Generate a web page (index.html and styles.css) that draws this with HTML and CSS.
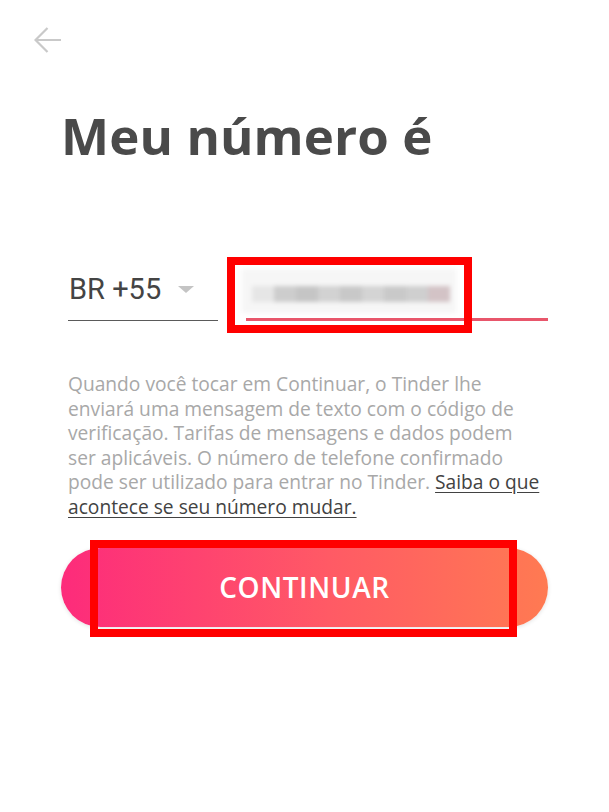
FILE: index.html
```html
<!DOCTYPE html>
<html lang="pt-BR">
<head>
	<meta charset="utf-8">
	<title>Meu número é</title>
	<link rel="stylesheet" href="styles.css">
</head>
<body>
	<div class="screen">
		<div class="top-bar">
			<svg class="back" width="28" height="28" viewBox="0 0 28 28">
				<path d="M27 13 H1.5 M13.5 1 L1.5 13 L13.5 25" fill="none" stroke="#c9c9c9" stroke-width="2.2"/>
			</svg>
		</div>

		<h1 class="title">Meu número é</h1>

		<div class="phone-row">
			<div class="country">
				<span class="country-code">BR +55</span>
				<span class="caret"></span>
			</div>
			<div class="number">
				<div class="blur">
					<span class="px p1"></span><span class="px p2"></span><span class="px p3"></span><span class="px p4"></span><span class="px p5"></span><span class="px p6"></span><span class="px p7"></span><span class="px p8"></span><span class="px p9"></span>
				</div>
				<div class="mark mark-number"></div>
			</div>
		</div>

		<p class="info">
			Quando você tocar em Continuar, o Tinder lhe enviará uma mensagem de texto com o código de verificação. Tarifas de mensagens e dados podem ser aplicáveis. O número de telefone confirmado pode ser utilizado para entrar no Tinder. <a href="#">Saiba o que acontece se seu número mudar.</a>
		</p>

		<div class="button-wrap">
			<button class="continue">CONTINUAR</button>
			<div class="mark mark-button"></div>
		</div>
	</div>
</body>
</html>
```

FILE: styles.css
```css
html, body {
	margin: 0;
	padding: 0;
	background: #fff;
}

.screen {
	width: 609px;
	height: 812px;
	padding: 0 61px;
	box-sizing: border-box;
	font-family: "Open Sans", Lato, sans-serif;
}

.top-bar {
	padding-top: 27px;
	margin-left: -27px;
	height: 28px;
}

.back {
	display: block;
}

.title {
	margin: 48px 0 0 0;
	font-size: 51px;
	font-weight: 700;
	line-height: 64px;
	color: #4a4a4a;
	letter-spacing: 0.1px;
}

.phone-row {
	display: flex;
	align-items: flex-end;
	margin: 96px 0 0 7px;
}

.country {
	width: 150px;
	height: 58px;
	display: flex;
	align-items: center;
	border-bottom: 1.5px solid #5a5a5a;
	box-sizing: border-box;
}

.country-code {
	font-family: Roboto, sans-serif;
	font-size: 29px;
	color: #444;
	margin: 0 0 6px 1px;
}

.caret {
	width: 0;
	height: 0;
	margin: 0 0 4px 17px;
	border-left: 8px solid transparent;
	border-right: 8px solid transparent;
	border-top: 7px solid #c4c4c4;
}

.number {
	position: relative;
	margin-left: 28px;
	flex: 1;
	height: 58px;
	border-bottom: 3px solid #e8566b;
	box-sizing: border-box;
}

.blur {
	position: absolute;
	left: -4px;
	top: 6px;
	width: 214px;
	height: 44px;
	display: flex;
	background: #f6f6f6;
	filter: blur(2px);
}

.px {
	flex: 1;
	margin: 17px 0 11px;
	background: #d0d0d0;
}

.p1 { background: #e6e6e6; margin-left: 10px; }
.p2 { background: #cdcdcd; }
.p3 { background: #c5c5c5; }
.p4 { background: #d2d2d2; }
.p5 { background: #c8c8c8; }
.p6 { background: #d4d4d4; }
.p7 { background: #c9c9c9; }
.p8 { background: #cfcfcf; }
.p9 { background: #d3c3c6; margin-right: 6px; }

.mark {
	position: absolute;
	border: 8px solid #ff0000;
	box-sizing: border-box;
}

.mark-number {
	left: -19px;
	top: -6px;
	width: 245px;
	height: 76px;
}

.info {
	width: 474px;
	margin: 51px 0 0 7px;
	font-size: 19.2px;
	line-height: 24.6px;
	color: #a8a8a8;
}

.info a {
	color: #424242;
	text-decoration: underline;
	text-underline-offset: 3px;
}

.button-wrap {
	position: relative;
	margin-top: 28px;
}

.continue {
	display: block;
	width: 100%;
	height: 79px;
	border: none;
	border-radius: 40px;
	background: linear-gradient(90deg, #fd2b7b 0%, #ff5a65 55%, #ff7a52 100%);
	box-shadow: 0 1px 4px rgba(0, 0, 0, 0.12);
	color: #fff;
	font-family: "Open Sans", sans-serif;
	font-size: 28px;
	font-weight: 600;
	letter-spacing: 0.6px;
	cursor: pointer;
}

.mark-button {
	left: 29px;
	top: -8px;
	width: 427px;
	height: 97px;
}
```
